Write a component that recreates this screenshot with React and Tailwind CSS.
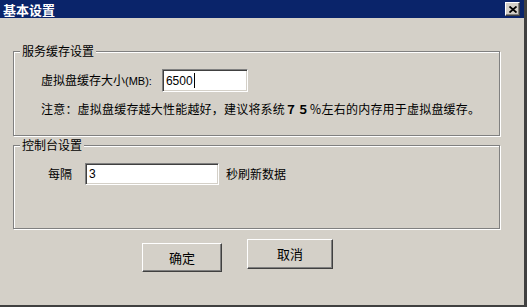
import React from 'react';

const cjk = { fontFamily: '"Noto Sans CJK SC", "Noto Sans", sans-serif' };

const Group = ({ title, className, children }) => (
  <div
    className={`relative ml-[13px] w-[487px] border border-[#808080] shadow-[inset_1px_1px_0_#fff,1px_1px_0_#fff] ${className}`}
  >
    <span className="absolute left-[6px] top-[-9px] bg-[#d4d0c8] px-[2px] text-[12px] leading-[16px] text-black">
      {title}
    </span>
    {children}
  </div>
);

const Field = ({ value, caret, className }) => (
  <div
    className={`flex items-center bg-white border border-t-[#808080] border-l-[#808080] border-b-white border-r-white shadow-[inset_1px_1px_0_#404040,inset_-1px_-1px_0_#d4d0c8] pl-[3px] text-[12px] text-black ${className}`}
    style={{ fontFamily: '"Liberation Sans", Arial, sans-serif' }}
  >
    {value}
    {caret && <span className="ml-[1px] inline-block h-[15px] w-[1px] bg-black"></span>}
  </div>
);

const Button = ({ label, className }) => (
  <button
    className={`flex items-center justify-center bg-[#d4d0c8] border border-t-white border-l-white border-b-[#404040] border-r-[#404040] shadow-[inset_-1px_-1px_0_#808080] text-[13px] text-black ${className}`}
  >
    {label}
  </button>
);

const App = () => {
  return (
    <div
      className="flex h-[307px] w-[527px] flex-col overflow-hidden border-b-2 border-r-[3px] border-[#404040] bg-[#d4d0c8] select-none"
      style={cjk}
    >
      {/* Title bar */}
      <div className="flex h-[18px] shrink-0 items-center justify-between bg-[#0a246a] pl-[3px] pr-[4px]">
        <span className="text-[13px] font-bold leading-none text-white">基本设置</span>
        <div className="flex h-[14px] w-[15px] items-center justify-center border border-t-white border-l-white border-b-[#404040] border-r-[#404040] bg-[#d4d0c8] shadow-[inset_-1px_-1px_0_#808080]">
          <svg width="8" height="7" viewBox="0 0 8 7">
            <path d="M0.5 0.5 L7.5 6.5 M7.5 0.5 L0.5 6.5" stroke="#000" strokeWidth="1.8" />
          </svg>
        </div>
      </div>

      {/* 服务缓存设置 */}
      <Group title="服务缓存设置" className="mt-[33px] h-[85px] pl-[27px] pt-[17px]">
        <div className="flex h-[23px] items-center">
          <span className="text-[12px] text-black">
            虚拟盘缓存大小
            <span className="text-[11px]" style={{ fontFamily: '"Liberation Sans", Arial, sans-serif' }}>(MB):</span>
          </span>
          <Field value="6500" caret className="ml-[10px] h-[23px] w-[86px]" />
        </div>
        <p className="mt-[9px] text-[12px] leading-[16px] tracking-[0.2px] text-black">
          注意：虚拟盘缓存越大性能越好，建议将系统<span className="font-bold">７５</span>％左右的内存用于虚拟盘缓存。
        </p>
      </Group>

      {/* 控制台设置 */}
      <Group title="控制台设置" className="mt-[9px] h-[84px] pl-[34px] pt-[17px]">
        <div className="flex h-[22px] items-center">
          <span className="text-[12px] text-black">每隔</span>
          <Field value="3" className="ml-[13px] h-[22px] w-[134px]" />
          <span className="ml-[7px] text-[12px] text-black">秒刷新数据</span>
        </div>
      </Group>

      {/* Buttons */}
      <div className="ml-[142px] mt-[10px] flex items-start gap-[25px]">
        <Button label="确定" className="mt-[4px] h-[29px] w-[80px]" />
        <Button label="取消" className="h-[30px] w-[86px]" />
      </div>
    </div>
  );
};

export default App;
